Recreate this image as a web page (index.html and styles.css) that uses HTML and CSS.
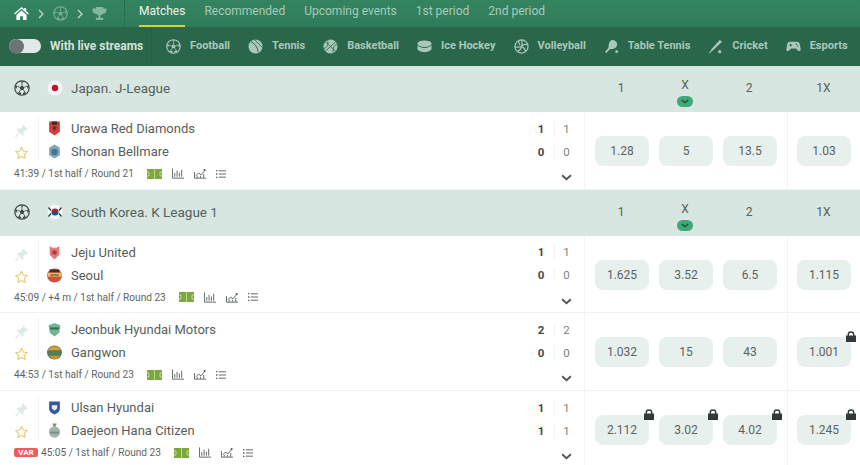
FILE: index.html
```html
<!DOCTYPE html>
<html lang="en">
<head>
    <meta charset="UTF-8">
    <title>Live matches</title>
    <link rel="stylesheet" href="styles.css">
</head>
<body>
    <svg class="sprite" width="0" height="0">
        <symbol id="ball" viewBox="0 0 16 16">
            <circle cx="8" cy="8" r="7.2" fill="none" stroke="currentColor" stroke-width="1.2"/>
            <path d="M8 5.6l2.3 1.6-.9 2.7H6.6l-.9-2.7z" fill="currentColor"/>
            <path d="M8 5.6V3M10.3 7.2l2.5-.9M9.4 9.9l1.5 2.2M6.6 9.9l-1.500 2.2M5.7 7.2l-2.5-.9" fill="none" stroke="currentColor" stroke-width=".8"/>
            <path d="M5.8 1.5L8 3l2.2-1.5zM14.5 5l-1.7 1.3.8 2.500 1-.5zM1.5 5l1.7 1.3-.8 2.5-1-.5zM3.5 13l1.6-.9 2 1-.2 2zM12.500 13l-1.6-.9-2 1 .2 2z" fill="currentColor"/>
        </symbol>
        <symbol id="tennis" viewBox="0 0 16 16">
            <circle cx="8" cy="8" r="7.5" fill="currentColor"/>
            <path d="M3 2.5c4 2 7 6 8 11.5M7 1c2.5 2 6 5.5 8 8" fill="none" stroke="#2a6649" stroke-width="1"/>
        </symbol>
        <symbol id="basket" viewBox="0 0 16 16">
            <circle cx="8" cy="8" r="7.5" fill="currentColor"/>
            <path d="M2.5 3l11 10M13.5 3l-11 10M5 1.5c1 4-.5 8-4 8.5M11 14.5c-1-4 .5-8 4-8.5" fill="none" stroke="#2a6649" stroke-width=".9"/>
        </symbol>
        <symbol id="puck" viewBox="0 0 16 16">
            <ellipse cx="8" cy="5" rx="7.5" ry="3.5" fill="currentColor"/>
            <path d="M.5 6.5v4c0 2 3.5 3.5 7.5 3.5s7.5-1.5 7.5-3.5v-4c-1 2-4 3-7.5 3s-6.5-1-7.5-3z" fill="currentColor"/>
        </symbol>
        <symbol id="volley" viewBox="0 0 16 16">
            <circle cx="8" cy="8" r="7" fill="none" stroke="currentColor" stroke-width="1.3"/>
            <path d="M8 1c1 3 1 5 0 7-2 1-4 1-7 .5M8 8c2 1 4 3 4.5 5.5M8 8c-.5 2.5-2 4.5-4.5 5.5M5 2c0 2 .5 3 1.5 5M14.5 6c-2-.5-4 0-5.5 1" fill="none" stroke="currentColor" stroke-width="1.3"/>
        </symbol>
        <symbol id="tabletennis" viewBox="0 0 16 16">
            <path d="M9 1c3 0 5.5 2.5 5 5.5-.3 2-2 3.500-4 4-1.5.3-3 .3-4 .8L2.5 15 1 13.5l3.500-3.700c.5-1 .2-2.300.5-3.800C5.500 3 7 1 9 1z" fill="currentColor"/>
            <circle cx="13.5" cy="13.5" r="1.5" fill="currentColor"/>
        </symbol>
        <symbol id="cricket" viewBox="0 0 16 16">
            <path d="M12.5 1L15 3 6 11.5 4 13l-2.5 2.5-.7-.7L3 12.3l1-2z" fill="currentColor"/>
            <circle cx="12.5" cy="13.5" r="1.7" fill="currentColor"/>
        </symbol>
        <symbol id="gamepad" viewBox="0 0 16 16">
            <path d="M4 3h8c1.5 0 2.3 1 2.7 2.5l1 5.5c.2 1.5-1.5 2.5-2.7 1.5L10.5 10h-5L3 12.5c-1.2 1-2.9 0-2.700-1.500l1-5.500C1.700 4 2.500 3 4 3z" fill="currentColor"/>
            <path d="M3.5 6.5h3M5 5v3" stroke="#2a6649" stroke-width="1"/>
            <circle cx="11" cy="5.5" r=".8" fill="#2a6649"/>
            <circle cx="12.3" cy="7.5" r=".8" fill="#2a6649"/>
        </symbol>
        <symbol id="pin" viewBox="0 0 14 14">
            <path d="M8.5.5l5 5-1.4.7-.9-.3-2.5 2.500.4 2.500-1.100 1.100L5.500 9 1.500 13.500.5 12.500 5 8.500 2 5.500l1.100-1.100 2.500.4L8.100 2.300l-.3-.9z" fill="currentColor"/>
        </symbol>
        <symbol id="star" viewBox="0 0 14 14">
            <path d="M7 1.300l1.800 3.700 4 .6-2.900 2.800.7 4L7 10.500l-3.600 1.900.7-4L1.200 5.600l4-.6z" fill="#fffdf3" stroke="currentColor" stroke-width="1.200" stroke-linejoin="round"/>
        </symbol>
        <symbol id="field" viewBox="0 0 15 10">
            <rect width="15" height="10" fill="#7aa83a"/>
            <path d="M7.5 0v10M0 3h2v4H0M15 3h-2v4h2" fill="none" stroke="#d5e4b8" stroke-width=".8"/>
        </symbol>
        <symbol id="bars" viewBox="0 0 13 11">
            <path d="M.5 0v10.500H13M3 9V5M5.500 9V2.500M8 9V4.500M10.500 9V1.500" fill="none" stroke="currentColor"/>
        </symbol>
        <symbol id="trend" viewBox="0 0 13 11">
            <path d="M.5 4v6.500H13M2 8l3-3 2.500 2L11 3" fill="none" stroke="currentColor"/>
            <circle cx="11.500" cy="1.800" r="1.200" fill="currentColor"/>
            <path d="M3.500 10V8M7 10V8M10.500 10V6" stroke="currentColor"/>
        </symbol>
        <symbol id="list" viewBox="0 0 11 10">
            <path d="M3 1.500h8M3 5h8M3 8.500h8" stroke="currentColor"/>
            <path d="M0 .5h1.500v1.500H0zM0 4.200h1.500v1.500H0zM0 8h1.500v1.500H0z" fill="currentColor"/>
        </symbol>
        <symbol id="chev" viewBox="0 0 10 6">
            <path d="M1 1l4 3.500L9 1" fill="none" stroke="currentColor" stroke-width="1.700"/>
        </symbol>
        <symbol id="lock" viewBox="0 0 10 11">
            <path d="M0 4.500h10V11H0z" fill="currentColor"/>
            <path d="M2.300 5V3.200a2.700 2.200 0 0 1 5.400 0V5" fill="none" stroke="currentColor" stroke-width="1.400"/>
        </symbol>
    </svg>

    <nav class="top-bar">
        <div class="crumbs">
            <svg class="crumb-home" viewBox="0 0 16 14"><path d="M8 0l3 2.600V1h2v3.300L16 7l-1 1-7-6-7 6-1-1zM2.500 8.500L8 3.800l5.500 4.700V14h-4v-4h-3v4h-4z" fill="currentColor"/></svg>
            <svg class="crumb-arrow" viewBox="0 0 6 10"><path d="M1 1l4 4-4 4" fill="none" stroke="currentColor" stroke-width="1.200"/></svg>
            <svg class="crumb-ball"><use href="#ball"/></svg>
            <svg class="crumb-arrow" viewBox="0 0 6 10"><path d="M1 1l4 4-4 4" fill="none" stroke="currentColor" stroke-width="1.200"/></svg>
            <svg class="crumb-cup" viewBox="0 0 16 14"><path d="M4 0h8v1.500h3.500V4c0 2-2 3-4 3.300-.5.800-1.500 1.400-2.500 1.600v2.600h3V14H4v-2.500h3V8.900C6 8.700 5 8.100 4.500 7.300 2.500 7 .5 6 .5 4V1.500H4z" fill="currentColor"/></svg>
        </div>
        <div class="tabs">
            <a class="tab active">Matches</a>
            <a class="tab">Recommended</a>
            <a class="tab">Upcoming events</a>
            <a class="tab">1st period</a>
            <a class="tab">2nd period</a>
        </div>
    </nav>

    <div class="sport-bar">
        <div class="live-filter">
            <span class="toggle"><span class="knob"></span></span>
            <span>With live streams</span>
        </div>
        <div class="sports">
            <a class="sport"><svg><use href="#ball"/></svg><span>Football</span></a>
            <a class="sport"><svg><use href="#tennis"/></svg><span>Tennis</span></a>
            <a class="sport"><svg><use href="#basket"/></svg><span>Basketball</span></a>
            <a class="sport"><svg><use href="#puck"/></svg><span>Ice Hockey</span></a>
            <a class="sport"><svg><use href="#volley"/></svg><span>Volleyball</span></a>
            <a class="sport"><svg><use href="#tabletennis"/></svg><span>Table Tennis</span></a>
            <a class="sport"><svg><use href="#cricket"/></svg><span>Cricket</span></a>
            <a class="sport"><svg><use href="#gamepad"/></svg><span>Esports</span></a>
        </div>
    </div>

    <section class="league">
        <div class="league-name">
            <svg class="league-ball"><use href="#ball"/></svg>
            <svg class="flag" viewBox="0 0 16 16"><circle cx="8" cy="8" r="7.5" fill="#f4f6f5"/><circle cx="8" cy="8" r="3.2" fill="#c8102e"/></svg>
            <span>Japan. J-League</span>
        </div>
        <div class="league-odds">
            <span class="head">1</span>
            <span class="head head-x">X<i class="more"><svg><use href="#chev"/></svg></i></span>
            <span class="head">2</span>
            <span class="head head-last">1X</span>
        </div>
    </section>

    <article class="match">
        <div class="info">
            <div class="teams">
                <div class="actions">
                    <svg class="pin"><use href="#pin"/></svg>
                    <svg class="star"><use href="#star"/></svg>
                </div>
                <div class="names">
                    <div class="team">
                        <svg class="badge" viewBox="0 0 14 14"><path d="M2 .5h10v9.500l-5 3.500-5-3.500z" fill="#cf4238"/><path d="M4.500.5h5v3h-5z" fill="#3a2a2a"/><path d="M5 6l2-1.500L9 6 7 9.500z" fill="#7d2620"/></svg>
                        <span>Urawa Red Diamonds</span>
                    </div>
                    <div class="team">
                        <svg class="badge" viewBox="0 0 14 14"><path d="M7 .5l5 3v7l-5 3-5-3v-7z" fill="#7fa6b5"/><circle cx="7" cy="7.500" r="3" fill="#3f7892"/></svg>
                        <span>Shonan Bellmare</span>
                    </div>
                </div>
                <div class="score">
                    <div class="score-row"><b>1</b><span>1</span></div>
                    <div class="score-row"><b>0</b><span>0</span></div>
                </div>
            </div>
            <div class="meta">
                <span class="status">41:39 / 1st half / Round 21</span>
                <span class="tools">
                    <svg class="tool-field"><use href="#field"/></svg>
                    <svg class="tool"><use href="#bars"/></svg>
                    <svg class="tool"><use href="#trend"/></svg>
                    <svg class="tool-list"><use href="#list"/></svg>
                </span>
                <svg class="expand"><use href="#chev"/></svg>
            </div>
        </div>
        <div class="odds">
            <span class="coef">1.28</span>
            <span class="coef">5</span>
            <span class="coef">13.5</span>
        </div>
        <div class="odds-extra">
            <span class="coef">1.03</span>
        </div>
    </article>

    <section class="league">
        <div class="league-name">
            <svg class="league-ball"><use href="#ball"/></svg>
            <svg class="flag" viewBox="0 0 16 16"><circle cx="8" cy="8" r="7.5" fill="#f4f6f5"/><path d="M4.5 8a3.5 3.5 0 0 1 7 0z" fill="#c8102e"/><path d="M4.5 8a3.5 3.5 0 0 0 7 0z" fill="#254a8f"/><path d="M1.5 3.5l2.5 3M14.5 3.5l-2.5 3M1.5 12.5l2.500-3M14.5 12.5l-2.500-3" stroke="#333" stroke-width="1.2"/></svg>
            <span>South Korea. K League 1</span>
        </div>
        <div class="league-odds">
            <span class="head">1</span>
            <span class="head head-x">X<i class="more"><svg><use href="#chev"/></svg></i></span>
            <span class="head">2</span>
            <span class="head head-last">1X</span>
        </div>
    </section>

    <article class="match">
        <div class="info">
            <div class="teams">
                <div class="actions">
                    <svg class="pin"><use href="#pin"/></svg>
                    <svg class="star"><use href="#star"/></svg>
                </div>
                <div class="names">
                    <div class="team">
                        <svg class="badge" viewBox="0 0 14 14"><path d="M2.500 1l2.500 1.500h4L11.500 1v8L7 13.500 2.500 9z" fill="#e07a7d"/><circle cx="7" cy="7" r="2.200" fill="#b8393d"/></svg>
                        <span>Jeju United</span>
                    </div>
                    <div class="team">
                        <svg class="badge" viewBox="0 0 14 14"><ellipse cx="7" cy="7" rx="7" ry="6.500" fill="#d0503f"/><path d="M.5 4.500h13v3.500H.5z" fill="#e9c46a"/><path d="M2.500 1.500h9v2.500h-9zM3 6h8v1H3z" fill="#43302b"/></svg>
                        <span>Seoul</span>
                    </div>
                </div>
                <div class="score">
                    <div class="score-row"><b>1</b><span>1</span></div>
                    <div class="score-row"><b>0</b><span>0</span></div>
                </div>
            </div>
            <div class="meta">
                <span class="status">45:09 / +4 m / 1st half / Round 23</span>
                <span class="tools">
                    <svg class="tool-field"><use href="#field"/></svg>
                    <svg class="tool"><use href="#bars"/></svg>
                    <svg class="tool"><use href="#trend"/></svg>
                    <svg class="tool-list"><use href="#list"/></svg>
                </span>
                <svg class="expand"><use href="#chev"/></svg>
            </div>
        </div>
        <div class="odds">
            <span class="coef">1.625</span>
            <span class="coef">3.52</span>
            <span class="coef">6.5</span>
        </div>
        <div class="odds-extra">
            <span class="coef">1.115</span>
        </div>
    </article>

    <article class="match">
        <div class="info">
            <div class="teams">
                <div class="actions">
                    <svg class="pin"><use href="#pin"/></svg>
                    <svg class="star"><use href="#star"/></svg>
                </div>
                <div class="names">
                    <div class="team">
                        <svg class="badge" viewBox="0 0 14 14"><path d="M1.500 3L7 1l5.500 2-1 7L7 13.500 2.500 10z" fill="#74b597"/><path d="M3 5h8v2H3z" fill="#2f6f53"/></svg>
                        <span>Jeonbuk Hyundai Motors</span>
                    </div>
                    <div class="team">
                        <svg class="badge" viewBox="0 0 14 14"><ellipse cx="7" cy="7" rx="7" ry="6.500" fill="#4f7f58"/><path d="M.5 5h13L10 1.500H4z" fill="#e29a38"/><path d="M1.500 10h11L9 13H5z" fill="#c7913a"/></svg>
                        <span>Gangwon</span>
                    </div>
                </div>
                <div class="score">
                    <div class="score-row"><b>2</b><span>2</span></div>
                    <div class="score-row"><b>0</b><span>0</span></div>
                </div>
            </div>
            <div class="meta">
                <span class="status">44:53 / 1st half / Round 23</span>
                <span class="tools">
                    <svg class="tool-field"><use href="#field"/></svg>
                    <svg class="tool"><use href="#bars"/></svg>
                    <svg class="tool"><use href="#trend"/></svg>
                    <svg class="tool-list"><use href="#list"/></svg>
                </span>
                <svg class="expand"><use href="#chev"/></svg>
            </div>
        </div>
        <div class="odds">
            <span class="coef">1.032</span>
            <span class="coef">15</span>
            <span class="coef">43</span>
        </div>
        <div class="odds-extra">
            <span class="coef">1.001<svg class="lock"><use href="#lock"/></svg></span>
        </div>
    </article>

    <article class="match">
        <div class="info">
            <div class="teams">
                <div class="actions">
                    <svg class="pin"><use href="#pin"/></svg>
                    <svg class="star"><use href="#star"/></svg>
                </div>
                <div class="names">
                    <div class="team">
                        <svg class="badge" viewBox="0 0 14 14"><path d="M2 1.500h10V8c0 3-2.500 4.500-5 5.500C4.500 12.500 2 11 2 8z" fill="#2f5aa0"/><path d="M4.500 5h5v3L7 10 4.500 8z" fill="#e8eef6"/></svg>
                        <span>Ulsan Hyundai</span>
                    </div>
                    <div class="team">
                        <svg class="badge" viewBox="0 0 14 14"><circle cx="7" cy="8.500" r="5.300" fill="#a4b4ad"/><path d="M5 .5h4l-1 3H6z" fill="#7f9a5e"/><path d="M3 8h8v2H3z" fill="#7d8f88"/></svg>
                        <span>Daejeon Hana Citizen</span>
                    </div>
                </div>
                <div class="score">
                    <div class="score-row"><b>1</b><span>1</span></div>
                    <div class="score-row"><b>1</b><span>1</span></div>
                </div>
            </div>
            <div class="meta">
                <span class="var">VAR</span>
                <span class="status">45:05 / 1st half / Round 23</span>
                <span class="tools">
                    <svg class="tool-field"><use href="#field"/></svg>
                    <svg class="tool"><use href="#bars"/></svg>
                    <svg class="tool"><use href="#trend"/></svg>
                    <svg class="tool-list"><use href="#list"/></svg>
                </span>
                <svg class="expand"><use href="#chev"/></svg>
            </div>
        </div>
        <div class="odds">
            <span class="coef">2.112<svg class="lock"><use href="#lock"/></svg></span>
            <span class="coef">3.02<svg class="lock"><use href="#lock"/></svg></span>
            <span class="coef">4.02<svg class="lock"><use href="#lock"/></svg></span>
        </div>
        <div class="odds-extra">
            <span class="coef">1.245<svg class="lock"><use href="#lock"/></svg></span>
        </div>
    </article>
</body>
</html>
```

FILE: styles.css
```css
html, body {
    height: 465px;
    overflow: hidden;
}
body {
    margin: 0;
    font-family: Roboto, "Liberation Sans", sans-serif;
    color: #4c5351;
    background: white;
}
.sprite {
    display: none;
}
a {
    cursor: pointer;
}

/* top green bar */
.top-bar {
    display: flex;
    height: 27px;
    background: linear-gradient(to bottom, #358460, #2f7c59);
    color: #a8cbbb;
    font-size: 12px;
}
.crumbs {
    display: flex;
    align-items: center;
    gap: 9px;
    width: 125px;
    height: 27px;
    padding-left: 14px;
    box-sizing: border-box;
    border-right: 1px solid #2a6f50;
}
.crumb-home {
    width: 15px;
    height: 13px;
    color: white;
}
.crumb-arrow {
    width: 6px;
    height: 10px;
    color: #c3dbcf;
}
.crumb-ball {
    width: 15px;
    height: 15px;
    color: #78b096;
}
.crumb-cup {
    width: 15px;
    height: 13px;
    color: #85b7a0;
}
.tabs {
    display: flex;
    gap: 19px;
    margin-left: 14px;
}
.tab {
    height: 25px;
    line-height: 22px;
    white-space: nowrap;
}
.tab.active {
    color: #eaf3ee;
    border-bottom: 2px solid #d8d230;
}

/* sports filter */
.sport-bar {
    display: flex;
    align-items: center;
    height: 39px;
    background: #2a6649;
    color: #a9c8b9;
    font-size: 11px;
    font-weight: 700;
}
.live-filter {
    display: flex;
    align-items: center;
    gap: 9px;
    width: 152px;
    height: 39px;
    padding: 0 0 1px 9px;
    box-sizing: border-box;
    border-right: 1px solid #286045;
    color: #d3e3db;
    font-size: 12px;
}
.toggle {
    display: block;
    width: 32px;
    height: 14px;
    border-radius: 7px;
    background: #e3e9e6;
}
.knob {
    display: block;
    width: 15px;
    height: 15px;
    border-radius: 50%;
    background: #6d7572;
}
.sports {
    display: flex;
    gap: 18px;
    margin-left: 14px;
}
.sport {
    display: flex;
    align-items: center;
    gap: 9px;
    white-space: nowrap;
}
.sport span {
    padding-bottom: 2px;
}
.sport svg {
    width: 15px;
    height: 15px;
    color: #a9c8b9;
}

/* league header */
.league {
    display: flex;
    height: 46px;
    background: #d7e6e1;
    color: #55605c;
}
.league-name {
    display: flex;
    align-items: center;
    width: 584px;
    padding: 0 0 2px 14px;
    box-sizing: border-box;
    font-size: 13.5px;
}
.league-ball {
    width: 16px;
    height: 16px;
    margin-right: 17px;
    color: #3f4644;
}
.flag {
    width: 16px;
    height: 16px;
    margin-right: 8px;
}
.league-odds {
    display: flex;
    flex: 1;
    padding-left: 5px;
    font-size: 12px;
    line-height: 44px;
}
.head {
    width: 64px;
    text-align: center;
}
.head-x {
    position: relative;
    line-height: 39px;
}
.head-last {
    width: 73px;
    margin-left: 6px;
}
.more {
    position: absolute;
    left: 24px;
    top: 30px;
    width: 16px;
    height: 11px;
    border-radius: 6px;
    background: #3fa97c;
    display: flex;
    align-items: center;
    justify-content: center;
}
.more svg {
    width: 8px;
    height: 5px;
    color: #1f4a37;
}

/* match rows */
.match {
    display: flex;
    height: 77.7px;
    box-sizing: border-box;
    border-bottom: 1px solid #eef3f1;
}
.info {
    width: 584px;
    position: relative;
    box-sizing: border-box;
    padding: 5px 0 0 14px;
}
.teams {
    display: flex;
}
.actions {
    display: flex;
    flex-direction: column;
    gap: 8px;
    width: 24px;
    height: 36px;
    padding-top: 7px;
    border-right: 1px solid #f1f4f3;
}
.pin {
    width: 15px;
    height: 15px;
    color: #dfe9e6;
}
.star {
    width: 15px;
    height: 15px;
    color: #e2cf86;
}
.names {
    flex: 1;
    font-size: 13px;
    color: #565e5b;
}
.team {
    display: flex;
    align-items: center;
    gap: 9px;
    height: 23px;
    padding-left: 8px;
}
.badge {
    width: 15px;
    height: 15px;
}
.score {
    width: 50px;
    font-size: 11.5px;
}
.score-row {
    display: flex;
    height: 23px;
    align-items: center;
}
.score-row b {
    width: 14px;
    padding-right: 6px;
    border-right: 1px solid #f1f4f3;
    text-align: center;
    color: #44494a;
}
.score-row span {
    width: 23px;
    text-align: center;
    color: #7a8280;
}
.meta {
    display: flex;
    align-items: center;
    height: 17px;
    margin-top: 2px;
    font-size: 10.1px;
    color: #5d6563;
}
.var {
    width: 24px;
    height: 9px;
    line-height: 9px;
    margin-right: 3px;
    border-radius: 2px;
    background: #ef5b5f;
    color: white;
    font-size: 8px;
    font-weight: 700;
    text-align: center;
}
.tools {
    display: flex;
    align-items: center;
    margin-left: 13px;
}
.tool-field {
    width: 15px;
    height: 10px;
    margin-right: 10px;
}
.tool {
    width: 12px;
    height: 11px;
    margin-right: 10px;
    color: #555e5b;
}
.tool-list {
    width: 10px;
    height: 10px;
    color: #555e5b;
}
.expand {
    position: absolute;
    left: 561px;
    top: 62px;
    width: 11px;
    height: 7px;
    color: #4e5654;
}

/* odds */
.odds {
    display: flex;
    align-items: center;
    gap: 10px;
    width: 204px;
    padding: 1px 0 0 10px;
    box-sizing: border-box;
    border-left: 1px solid #f0f4f2;
    border-right: 1px solid #f0f4f2;
}
.odds-extra {
    display: flex;
    align-items: center;
    padding: 1px 0 0 9px;
}
.coef {
    position: relative;
    width: 54px;
    height: 30px;
    line-height: 30px;
    border-radius: 8px;
    background: #e8f0ed;
    text-align: center;
    font-size: 12px;
    color: #5a6361;
}
.lock {
    position: absolute;
    right: -5px;
    top: -6px;
    width: 10px;
    height: 11px;
    color: #33393a;
}
```
